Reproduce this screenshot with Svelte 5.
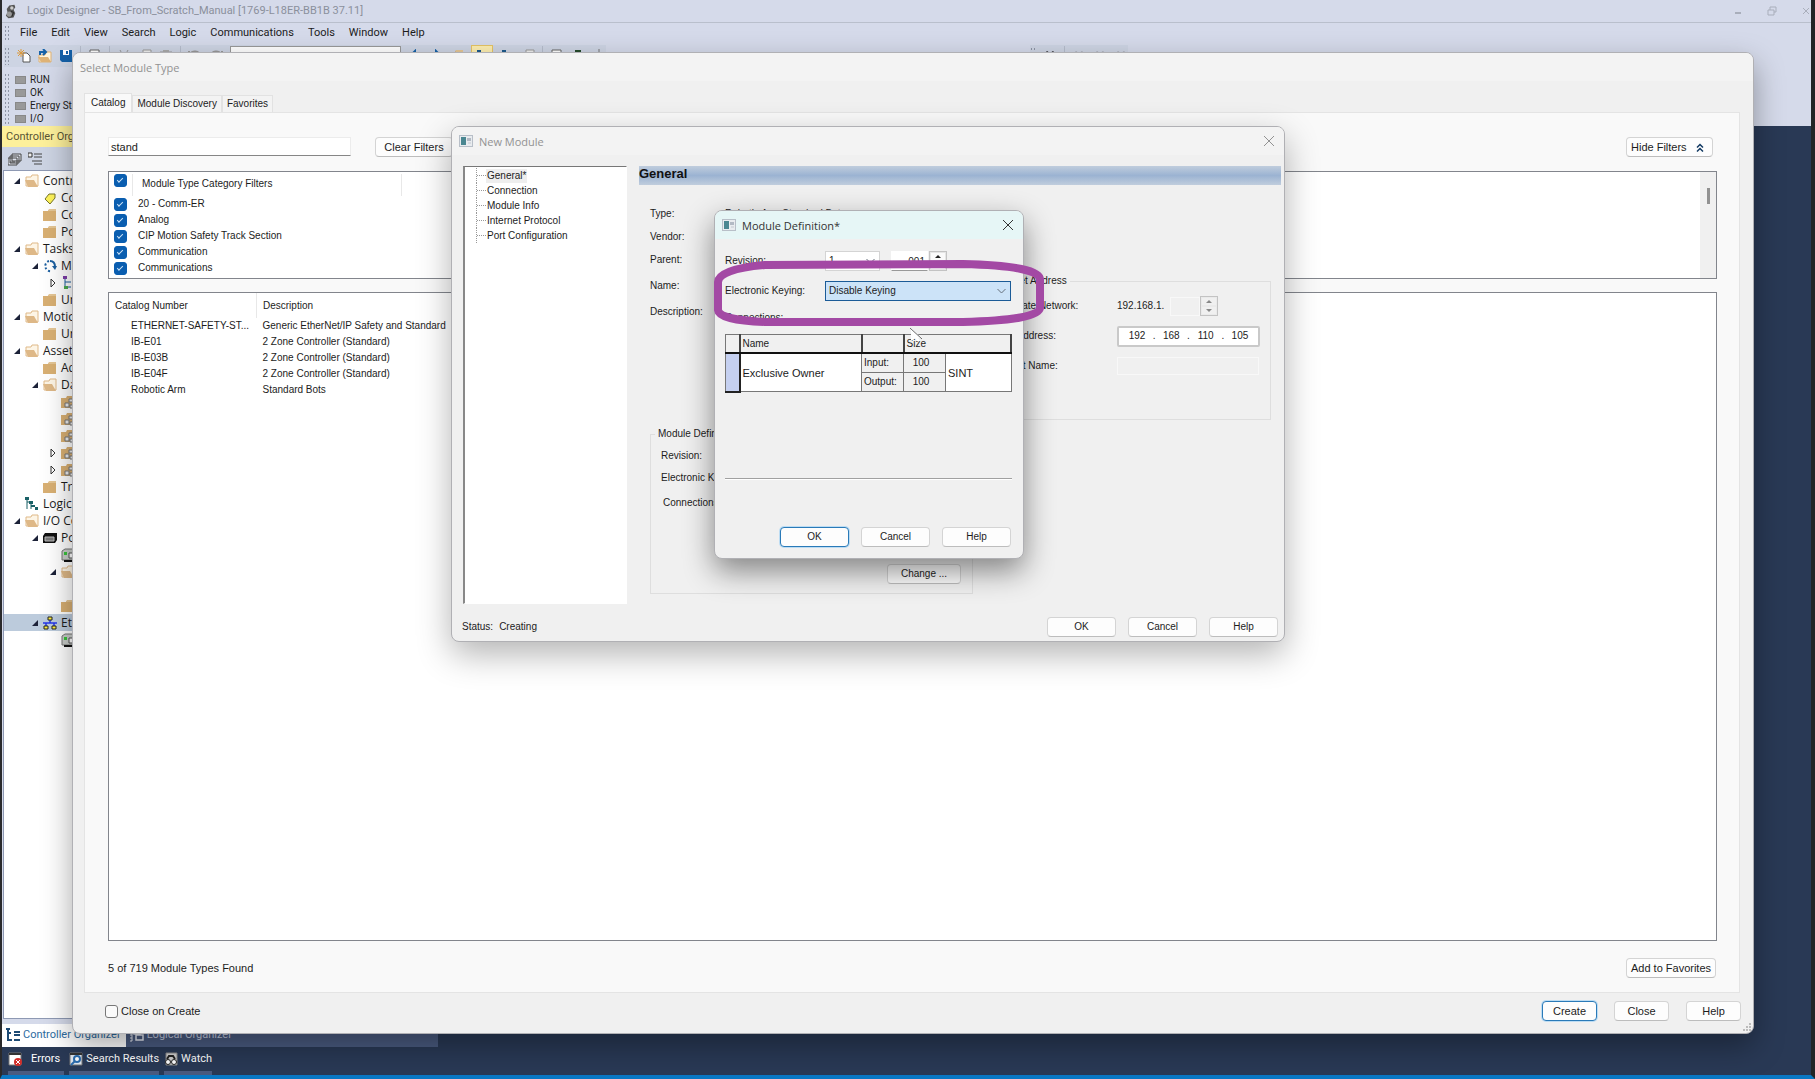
<script lang="ts">
    const menus = ['File', 'Edit', 'View', 'Search', 'Logic', 'Communications', 'Tools', 'Window', 'Help'];
    const leds = ['RUN', 'OK', 'Energy Storage', 'I/O'];

    type Node = { level: number; icon: string; label?: string; arrow?: string; selected?: boolean };

    const tree: Node[] = [
        { level: 0, icon: 'open', label: 'Controller', arrow: 'down' },
        { level: 1, icon: 'tag', label: 'Controller Tags' },
        { level: 1, icon: 'folder', label: 'Controller Fault' },
        { level: 1, icon: 'folder', label: 'Power-Up' },
        { level: 0, icon: 'open', label: 'Tasks', arrow: 'down' },
        { level: 1, icon: 'task', label: 'MainTask', arrow: 'down' },
        { level: 2, icon: 'program', arrow: 'right' },
        { level: 1, icon: 'folder', label: 'Unscheduled' },
        { level: 0, icon: 'open', label: 'Motion', arrow: 'down' },
        { level: 1, icon: 'folder', label: 'Ungrouped' },
        { level: 0, icon: 'open', label: 'Assets', arrow: 'down' },
        { level: 1, icon: 'folder', label: 'Add-On' },
        { level: 1, icon: 'open', label: 'Data Types', arrow: 'down' },
        { level: 2, icon: 'types' },
        { level: 2, icon: 'types' },
        { level: 2, icon: 'types' },
        { level: 2, icon: 'types', arrow: 'right' },
        { level: 2, icon: 'types', arrow: 'right' },
        { level: 1, icon: 'folder', label: 'Trends' },
        { level: 0, icon: 'logical', label: 'Logical Model' },
        { level: 0, icon: 'open', label: 'I/O Config', arrow: 'down' },
        { level: 1, icon: 'chassis', label: 'PointIO', arrow: 'down' },
        { level: 2, icon: 'module' },
        { level: 2, icon: 'open', arrow: 'down' },
        { level: 3, icon: '' },
        { level: 2, icon: 'folder' },
        { level: 1, icon: 'network', label: 'Ethernet', arrow: 'down', selected: true },
        { level: 2, icon: 'module' }
    ];

    const filters = ['20 - Comm-ER', 'Analog', 'CIP Motion Safety Track Section', 'Communication', 'Communications'];

    const modules = [
        ['ETHERNET-SAFETY-ST...', 'Generic EtherNet/IP Safety and Standard'],
        ['IB-E01', '2 Zone Controller (Standard)'],
        ['IB-E03B', '2 Zone Controller (Standard)'],
        ['IB-E04F', '2 Zone Controller (Standard)'],
        ['Robotic Arm', 'Standard Bots']
    ];

    const pages = ['General*', 'Connection', 'Module Info', 'Internet Protocol', 'Port Configuration'];
    const octets = ['192', '168', '110', '105'];

    let search = $state('stand');
    let keying = $state('Disable Keying');
    let closeOnCreate = $state(false);
</script>

{#snippet icon(name: string)}
    <svg class="icon" viewBox="0 0 14 14" aria-hidden="true">
        {#if name === 'folder'}
            <path d="M0 3h5l1-2h7v12H0z" fill="#d9b073" /><path d="M6 2h7" stroke="#f0dcb8" />
        {:else if name === 'open'}
            <path d="M1 12V3h5l1-2h6v11z" fill="#fdf5e6" stroke="#dfb988" /><path d="M0 6h9l4 7H3z" fill="#deb887" />
        {:else if name === 'types'}
            <path d="M0 3h5l1-2h8v12H0z" fill="#d9b073" /><path d="M4 8h4v4H4zM8 4h5v3H8zM9 10h4v3H9z" fill="#eee" stroke="#777" />
        {:else if name === 'tag'}
            <path d="M2 8l4-5h6v4l-5 6z" fill="#fdf25a" stroke="#77752c" />
        {:else if name === 'task'}
            <path d="M6 2a5 5 0 1 0 3 10" fill="none" stroke="#1b5fa0" stroke-width="2" stroke-dasharray="2 2" /><path d="M7 2c4 0 5 3 5 6" fill="none" stroke="#1b5fa0" stroke-width="2" /><path d="M9 7h5l-2 4z" fill="#1b5fa0" />
        {:else if name === 'program'}
            <path d="M4 1v11M4 6h6M4 11h6" stroke="#1b5fa0" fill="none" /><path d="M2 0h4v3H2z" fill="#7d3da8" /><path d="M3 10h4v3H3z" fill="#4caa50" />
        {:else if name === 'logical'}
            <path d="M2 1v11M2 5h4v7M6 9h3" stroke="#1a6167" fill="none" /><path d="M0 0h4v3H0zM4 4h4v3H4zM6 8h4v2H6zM10 10h3v3h-3z" fill="#1a6167" />
        {:else if name === 'chassis'}
            <path d="M0 5l2-3h12v7l-2 3H0z" fill="#111" /><path d="M2 6h9v4H2z" fill="#777" stroke="#bbb" />
        {:else if name === 'module'}
            <path d="M1 3l3-2h10v11H1z" fill="#c9cdc9" stroke="#777" /><path d="M3 4h3v3H3z" fill="#39c43c" /><path d="M8 5h4v5H8z" fill="#fff" stroke="#555" /><path d="M3 13h9" stroke="#111" stroke-width="2" />
        {:else if name === 'network'}
            <path d="M7 4v3M0 7h14M3 7v3M11 7v3" stroke="#2638e9" fill="none" stroke-width="1.5" /><path d="M5 1h4v3H5zM1 10h4v3H1zM9 10h4v3H9z" fill="#ffee3c" stroke="#222" />
        {:else if name === 'new'}
            <path d="M6 4h4l3 3v6H6z" fill="#fff" stroke="#555" /><path d="M4 0v8M0 4h8M1 1l6 6M7 1L1 7" stroke="#dc9a3e" />
        {:else if name === 'openfile'}
            <path d="M1 6h6l1-3h5v10H1z" fill="#fff4de" stroke="#dfb377" /><path d="M0 8h10l3 5H3z" fill="#dfb377" /><path d="M2 6V3h5M5 0l3 3-3 3" fill="none" stroke="#1561a8" stroke-width="2" />
        {:else if name === 'save'}
            <path d="M1 1h12v12H3l-2-2z" fill="#1561a8" /><path d="M4 1h6v5H4z" fill="#fff" /><path d="M8 2v3" stroke="#1561a8" stroke-width="2" />
        {:else if name === 'print'}
            <path d="M2 12V1h9v11" fill="#fff" stroke="#666" />
        {:else if name === 'cut'}
            <path d="M3 1l6 11M11 1L5 12" stroke="#999" />
        {:else if name === 'copy'}
            <path d="M5 1h8v9H5zM1 4h8v9H1z" fill="#eee" stroke="#999" />
        {:else if name === 'paste'}
            <path d="M1 3h12v10H1z" fill="#ddd" stroke="#999" /><path d="M4 1h6v3H4z" fill="#aaa" />
        {:else if name === 'undo'}
            <path d="M2 6c1-5 10-5 10 2M1 2v5h5" fill="none" stroke="#999" stroke-width="2" />
        {:else if name === 'redo'}
            <path d="M12 6C11 1 2 1 2 8M13 2v5H8" fill="none" stroke="#999" stroke-width="2" />
        {:else if name === 'up'}
            <path d="M2 7l5-5v10M3 6h8" fill="none" stroke="#1561a8" stroke-width="2" />
        {:else if name === 'down'}
            <path d="M12 7L7 2v10M11 6H3" fill="none" stroke="#1561a8" stroke-width="2" />
        {:else if name === 'hierarchy'}
            <path d="M2 1h4v4H2zM7 6h4v3H7zM7 10h4v3H7z" fill="#1d5a8c" /><path d="M3 4v8h4M3 7h4" fill="none" stroke="#1d5a8c" />
        {:else if name === 'organizer'}
            <path d="M0 1h4M2 1v11h4M2 5h3M8 4h6M8 7h6M8 12h6" fill="none" stroke="#1d4a74" stroke-width="2" />
        {:else if name === 'logicaltab'}
            <path d="M2 1v12M0 4h2M0 7h2M0 10h2M0 13h2" stroke="#e8ecf4" /><path d="M4 2h6v4H4zM6 7h7v5H6z" fill="#4a5b80" stroke="#e8ecf4" stroke-width="1.5" />
        {:else if name === 'chip'}
            <path d="M4 1h6v12H4z" fill="#264b2c" /><path d="M2 4h2M2 7h2M10 4h2M10 7h2" stroke="#5da162" />
        {:else if name === 'transfer'}
            <path d="M7 0v10M3 3v5h8V3" fill="none" stroke="#777" />
        {:else if name === 'find'}
            <path d="M1 5l3-3 3 2 3-2 3 3v7H9V7H5v5H1z" fill="#222" />
        {:else if name === 'findgrey'}
            <path d="M1 5l3-3 3 2 3-2 3 3v7H9V7H5v5H1z" fill="#a7abb4" />
        {:else if name === 'stack'}
            <path d="M4 2h9v7H4zM2 4h9v7H2zM0 6h9v7H0z" fill="#dfe3ec" stroke="#444" /><path d="M2 10h5" stroke="#444" />
        {:else if name === 'list'}
            <path d="M0 1h4v4H0z" fill="#eee" stroke="#333" /><path d="M6 2h8M6 5h8M4 9h10M6 12h8" stroke="#444" />
        {:else if name === 'errors'}
            <path d="M1 1h12v12H1z" fill="#fff" stroke="#777" /><path d="M1 2h12" stroke="#333" stroke-width="2" /><circle cx="10" cy="10" r="4" fill="#d32f2b" /><path d="M8 8l4 4M12 8l-4 4" stroke="#fff" />
        {:else if name === 'results'}
            <path d="M1 1h12v12H1z" fill="#dfe7f0" stroke="#777" /><path d="M1 2h12" stroke="#333" stroke-width="2" /><circle cx="8" cy="7" r="3" fill="#fff" stroke="#2a6cae" stroke-width="2" /><path d="M6 9l-4 4" stroke="#2a6cae" stroke-width="2" />
        {:else if name === 'watch'}
            <path d="M2 1h11v12H2z" fill="#ccc" stroke="#888" /><circle cx="4" cy="10" r="2.5" fill="#fff" stroke="#222" /><circle cx="10" cy="10" r="2.5" fill="#fff" stroke="#222" /><path d="M3 7l2-3h4l2 3" fill="none" stroke="#222" stroke-width="2" />
        {/if}
    </svg>
{/snippet}

{#snippet windowIcon()}
    <svg class="window-icon" viewBox="0 0 14 12" aria-hidden="true">
        <path d="M0 0h14v12H0z" fill="#e9ecef" /><path d="M0 .5h14M.5 0v12M13.5 0v12M0 11.5h14" stroke="#b8bfc8" />
        <path d="M2 2h5v8H2z" fill="#4a8791" /><path d="M9 3v3M11 3v3" stroke="#7d8899" /><path d="M9 8h3" stroke="#c4c9d1" />
    </svg>
{/snippet}

{#snippet closeIcon()}
    <svg class="close-icon" viewBox="0 0 12 12" aria-hidden="true"><path d="M1 1l10 10M11 1L1 11" stroke="currentColor" fill="none" /></svg>
{/snippet}

{#snippet chevron()}
    <svg class="chevron" viewBox="0 0 9 6" aria-hidden="true"><path d="M.5 1l4 4 4-4" fill="none" stroke="#66717c" /></svg>
{/snippet}

<div class="designer">
    <header class="titlebar">
        <svg class="logo" viewBox="0 0 14 16" aria-hidden="true">
            <path d="M5 1l6-1 1 3-2 3 2 4-2 5-6 1-3-3 2-4-1-4z" fill="#555" />
            <circle cx="8" cy="4" r="2" fill="#ccc" /><circle cx="5" cy="11" r="3" fill="#999" /><path d="M7 8l3 1-2 5" fill="none" stroke="#222" />
        </svg>
        <span>Logix Designer - SB_From_Scratch_Manual [1769-L18ER-BB1B 37.11]</span>
        <div class="titlebar__buttons">
            <button aria-label="Minimize"><svg viewBox="0 0 10 10"><path d="M2 7h6" stroke="currentColor" stroke-width="2" /></svg></button>
            <button aria-label="Restore"><svg viewBox="0 0 10 10"><path d="M1 4h6v5H1zM3 4V1h6v5H7" fill="none" stroke="currentColor" /></svg></button>
            <button aria-label="Close"><svg viewBox="0 0 10 10"><path d="M2 2l6 6M8 2L2 8" fill="none" stroke="currentColor" /></svg></button>
        </div>
    </header>
    <nav class="menubar">
        <span class="grip"></span>
        {#each menus as menu}
            <button>{menu}</button>
        {/each}
    </nav>
    <div class="toolbars">
        <div class="toolbar">
            <span class="grip"></span>
            {@render icon('new')}
            {@render icon('openfile')}
            {@render icon('save')}
            <i></i>
            {@render icon('print')}
            <i></i>
            {@render icon('cut')}
            {@render icon('copy')}
            {@render icon('paste')}
            <i></i>
            {@render icon('undo')}
            {@render icon('redo')}
            <input class="toolbar__search" aria-label="Find" />
            {@render icon('up')}
            {@render icon('down')}
            {@render icon('folder')}
            <span class="toolbar__active">{@render icon('hierarchy')}</span>
            {@render icon('hierarchy')}
            {@render icon('copy')}
            <i></i>
            {@render icon('print')}
            {@render icon('chip')}
            {@render icon('transfer')}
        </div>
        <div class="toolbar">
            <span class="grip"></span>
            {@render icon('find')}
            <i></i>
            {@render icon('findgrey')}
            {@render icon('findgrey')}
            {@render icon('findgrey')}
        </div>
    </div>
    <div class="status">
        <span class="grip"></span>
        <ul>
            {#each leds as led}
                <li>{led}</li>
            {/each}
        </ul>
    </div>

    <div class="workspace">
        <aside class="organizer">
            <div class="organizer__title">Controller Organizer</div>
            <div class="organizer__tools">{@render icon('stack')}{@render icon('list')}</div>
            <ul class="tree">
                {#each tree as node}
                    <li class="tree__row" class:tree__row--selected={node.selected} style="padding-left: {node.level * 18 + 9}px">
                        <span class="tree__arrow">
                            {#if node.arrow === 'down'}
                                <svg viewBox="0 0 8 8"><path d="M7 1v6H1z" fill="#1c2238" /></svg>
                            {:else if node.arrow === 'right'}
                                <svg viewBox="0 0 8 8"><path d="M2 0v8l4-4z" fill="#fff" stroke="#333" /></svg>
                            {/if}
                        </span>
                        {@render icon(node.icon)}
                        {node.label ?? ''}
                    </li>
                {/each}
            </ul>
            <div class="organizer__tabs">
                <button class="organizer__tab organizer__tab--active">{@render icon('organizer')}Controller Organizer</button>
                <button class="organizer__tab">{@render icon('logicaltab')}Logical Organizer</button>
            </div>
        </aside>
    </div>
    <footer class="dock">
        <button class="dock__wide">{@render icon('errors')}Errors</button>
        <button>{@render icon('results')}Search Results</button>
        <button>{@render icon('watch')}Watch</button>
    </footer>
</div>

<section class="window select-module">
    <h1 class="window__title window__title--inactive">Select Module Type</h1>
    <div class="tabs">
        <button class="tabs__tab tabs__tab--active">Catalog</button>
        <button class="tabs__tab">Module Discovery</button>
        <button class="tabs__tab">Favorites</button>
    </div>
    <div class="catalog">
        <div class="catalog__search">
            <input class="catalog__input" aria-label="Search" bind:value={search} />
            <button class="button catalog__clear">Clear Filters</button>
            <button class="button catalog__hide">
                Hide Filters
                <svg viewBox="0 0 8 8" aria-hidden="true"><path d="M1 4l3-3 3 3M1 8l3-3 3 3" fill="none" stroke="#123a63" stroke-width="1.5" /></svg>
            </button>
        </div>
        <div class="box filters">
            <div class="filters__list">
                <label class="filters__head"><input type="checkbox" checked /><span>Module Type Category Filters</span></label>
                {#each filters as filter}
                    <label><input type="checkbox" checked />{filter}</label>
                {/each}
            </div>
            <div class="filters__scroll"><span></span></div>
        </div>
        <div class="box results">
            <table>
                <thead>
                    <tr><th>Catalog Number</th><th>Description</th></tr>
                </thead>
                <tbody>
                    {#each modules as [number, description]}
                        <tr><td>{number}</td><td>{description}</td></tr>
                    {/each}
                </tbody>
            </table>
        </div>
        <div class="catalog__foot">
            <span>5 of 719 Module Types Found</span>
            <button class="button catalog__favorite">Add to Favorites</button>
        </div>
    </div>
    <div class="select-module__foot">
        <label><input type="checkbox" bind:checked={closeOnCreate} />Close on Create</label>
        <button class="button button--default">Create</button>
        <button class="button">Close</button>
        <button class="button">Help</button>
    </div>
    <svg class="resize" viewBox="0 0 9 9" aria-hidden="true"><path d="M6 0h2v2H6zM3 3h2v2H3zM6 3h2v2H6zM0 6h2v2H0zM3 6h2v2H3zM6 6h2v2H6z" fill="#bbb" /></svg>
</section>

<section class="window new-module">
    <h2 class="window__title window__title--inactive">
        {@render windowIcon()}New Module
        <button aria-label="Close">{@render closeIcon()}</button>
    </h2>
    <div class="new-module__body">
        <ul class="pages">
            {#each pages as page, i}
                <li><a href="#page{i}" class:current={i === 0}>{page}</a></li>
            {/each}
        </ul>
        <div class="general">
            <h3 class="general__title">General</h3>
            <dl class="general__facts">
                <dt>Type:</dt>
                <dd>Robotic Arm Standard Bots</dd>
                <dt>Vendor:</dt>
                <dd></dd>
                <dt>Parent:</dt>
                <dd></dd>
                <dt class="general__tall">Name:</dt>
                <dd></dd>
                <dt class="general__tall">Description:</dt>
                <dd></dd>
            </dl>
            <fieldset class="address">
                <legend>Ethernet Address</legend>
                <div class="address__row">
                    <label for="private">Private Network:</label>
                    <span class="address__prefix">192.168.1.</span>
                    <input id="private" class="address__host" disabled />
                    <span class="spinner spinner--disabled">
                        <button aria-label="Increase" disabled></button><button aria-label="Decrease" disabled></button>
                    </span>
                </div>
                <div class="address__row">
                    <label for="octet0">IP Address:</label>
                    <span class="address__ip">
                        {#each octets as octet, i}
                            {#if i > 0}<span>.</span>{/if}
                            <input id="octet{i}" aria-label="Octet {i + 1}" value={octet} />
                        {/each}
                    </span>
                </div>
                <div class="address__row">
                    <label for="host">Host Name:</label>
                    <input id="host" class="address__name" disabled />
                </div>
            </fieldset>
            <fieldset class="definition">
                <legend>Module Definition</legend>
                <p>Revision:</p>
                <p>Electronic Keying:</p>
                <p class="definition__last">Connections:</p>
                <button class="button definition__change">Change ...</button>
            </fieldset>
        </div>
    </div>
    <div class="new-module__foot">
        <span>Status:</span><span>Creating</span>
        <button class="button">OK</button>
        <button class="button">Cancel</button>
        <button class="button">Help</button>
    </div>
</section>

<section class="window module-definition">
    <h2 class="window__title window__title--active">
        {@render windowIcon()}Module Definition*
        <button aria-label="Close">{@render closeIcon()}</button>
    </h2>
    <div class="module-definition__body">
        <div class="field">
            <label for="major">Revision:</label>
            <span class="select select--small">
                <select id="major"><option>1</option></select>
                {@render chevron()}
            </span>
            <input class="minor" aria-label="Minor revision" value="001" />
            <span class="spinner">
                <button aria-label="Increase"></button><button aria-label="Decrease"></button>
            </span>
        </div>
        <div class="field">
            <label for="keying">Electronic Keying:</label>
            <span class="select select--focus">
                <select id="keying" bind:value={keying}><option>Disable Keying</option></select>
                {@render chevron()}
            </span>
        </div>
        <div class="connections-label">Connections:</div>
        <table class="connections">
            <colgroup><col class="c0" /><col class="c1" /><col class="c2" /><col class="c3" /><col class="c4" /></colgroup>
            <thead>
                <tr><th></th><th>Name</th><th></th><th colspan="2">Size</th></tr>
            </thead>
            <tbody>
                <tr>
                    <td rowspan="2" class="connections__mark"></td>
                    <td rowspan="2" class="connections__edit">Exclusive Owner</td>
                    <td>Input:</td>
                    <td class="connections__size">100</td>
                    <td rowspan="2" class="connections__edit">SINT</td>
                </tr>
                <tr><td>Output:</td><td class="connections__size">100</td></tr>
            </tbody>
        </table>
        <hr />
        <div class="module-definition__foot">
            <button class="button button--default">OK</button>
            <button class="button">Cancel</button>
            <button class="button">Help</button>
        </div>
    </div>
</section>

<!-- highlight drawn over the keying drop-down, and the mouse pointer -->
<svg class="marker" viewBox="0 0 332 68" aria-hidden="true">
    <path d="M52 5L250 4Q328 6 327 20V48Q326 60 250 62H52Q6 60 5 50V22Q6 9 52 5Z" fill="none" stroke="#a349a4" stroke-width="8" />
</svg>
<svg class="pointer" viewBox="0 0 14 18" aria-hidden="true"><path d="M1 0v13l4-3 3 4 2-1-2-3h4z" fill="#fff" /><path d="M0 0l12 11" stroke="#666" /></svg>

<style>
    :global(body) {
        background: #293955;
    }
    .designer,
    .window {
        font-family: 'Liberation Sans', sans-serif;
        font-size: 10px;
        line-height: 16px;
        color: #1c1c1c;
    }
    button,
    input,
    select {
        box-sizing: border-box;
        font: inherit;
        color: inherit;
        margin: 0;
        padding: 0;
    }
    button {
        border: none;
        background: none;
        white-space: nowrap;
    }
    ul {
        list-style: none;
        margin: 0;
        padding: 0;
    }
    svg {
        display: block;
        flex: none;
    }
    .icon {
        width: 14px;
        height: 14px;
    }

    /* main window */
    .designer {
        box-sizing: border-box;
        min-height: 100vh;
        display: flex;
        flex-direction: column;
        background: #293955;
        border-left: 2px solid #2a2a2c;
        border-right: 4px solid #222426;
        border-bottom: 4px solid #0a78c4;
        font-family: Roboto, sans-serif;
        font-size: 11px;
    }
    .titlebar {
        display: flex;
        align-items: center;
        gap: 10px;
        height: 22px;
        padding-left: 3px;
        background: #d5daea;
        border-bottom: 1px solid #b9bfcc;
        color: #8b909c;
    }
    .logo {
        width: 12px;
        height: 15px;
    }
    .titlebar__buttons {
        display: flex;
        gap: 24px;
        margin-left: auto;
        color: #a9aebb;
    }
    .titlebar__buttons svg {
        width: 10px;
        height: 10px;
    }
    .menubar {
        box-sizing: border-box;
        display: flex;
        align-items: center;
        gap: 14px;
        height: 22px;
        padding: 0 0 2px 2px;
        background: #d5daea;
    }
    .menubar .grip {
        margin-right: -4px;
    }
    .grip {
        width: 6px;
        align-self: stretch;
        background: radial-gradient(#8d94a5 1px, transparent 1px) 0 0 / 3px 4px;
        margin: 2px 0;
    }
    .toolbars {
        display: flex;
        align-items: flex-start;
        gap: 424px;
        height: 26px;
        background: #d5daea;
        padding-left: 2px;
    }
    .toolbar {
        display: flex;
        align-items: center;
        gap: 7px;
        height: 22px;
        background: #cdd4e3;
    }
    .toolbar i {
        width: 1px;
        height: 20px;
        background: #b5bccb;
    }
    .toolbar__search {
        width: 171px;
        height: 20px;
        border: 1px solid #999;
        background: #fff;
    }
    .toolbar__active {
        padding: 3px;
        background: #fdeeb0;
        border: 1px solid #e5c365;
    }
    .status {
        display: flex;
        gap: 5px;
        height: 55px;
        padding-left: 2px;
        background: #d5daea;
        font-size: 10px;
        line-height: 13px;
    }
    .status li {
        display: flex;
        align-items: center;
        gap: 4px;
    }
    .status ul {
        padding-top: 2px;
    }
    .status li::before {
        content: '';
        width: 9px;
        height: 6px;
        background: #999;
        border: 1px solid #888;
    }
    .workspace {
        flex: 1;
        display: flex;
    }
    .organizer {
        width: 436px;
        display: flex;
        flex-direction: column;
        background: #d5daea;
    }
    .organizer__title {
        height: 21px;
        line-height: 21px;
        padding-left: 4px;
        background: #fdf09b;
        color: #5a5434;
    }
    .organizer__tools {
        display: flex;
        align-items: center;
        gap: 6px;
        height: 23px;
        padding-left: 6px;
        background: #cdd4e3;
    }
    .tree {
        flex: 1;
        margin-left: 1px;
        padding-top: 1px;
        background: #fff;
        border: 1px solid #8e99b3;
        font: 12px/17px 'Open Sans', sans-serif;
    }
    .tree__row {
        display: flex;
        align-items: center;
        gap: 4px;
        height: 17px;
    }
    .tree__row--selected {
        background: #bccbdc;
    }
    .tree__arrow {
        width: 8px;
    }
    .organizer__tabs {
        display: flex;
        margin-top: 5px;
        height: 23px;
        background: #4a5b80;
    }
    .organizer__tab {
        display: flex;
        align-items: center;
        gap: 3px;
        padding: 0 5px 2px 4px;
        color: #c5cde0;
    }
    .organizer__tab--active {
        background: #fff;
        color: #2d6b9f;
    }
    .dock {
        display: flex;
        gap: 5px;
        height: 28px;
        padding-left: 6px;
        color: #fff;
    }
    .dock button {
        display: flex;
        align-items: center;
        gap: 3px;
        border-bottom: 4px solid #4a5b80;
    }
    .dock .dock__wide {
        gap: 9px;
        padding-right: 4px;
    }

    /* dialogs */
    .window {
        position: absolute;
        box-sizing: border-box;
        display: flex;
        flex-direction: column;
        background: #f0f0f0;
        border: 1px solid #b0b0b4;
        border-radius: 8px;
        box-shadow: 0 12px 30px rgba(0, 0, 0, 0.35);
    }
    .window__title {
        display: flex;
        align-items: center;
        gap: 6px;
        height: 28px;
        margin: 0;
        padding: 0 9px 0 7px;
        border-radius: 7px 7px 0 0;
        background: #f3f3f3;
        font: 11px 'Open Sans', sans-serif;
    }
    .window__title button {
        margin-left: auto;
    }
    .window__title--inactive {
        color: #929292;
    }
    .window__title--active {
        background: #e6f6f6;
        color: #333;
    }
    .window-icon {
        width: 14px;
        height: 12px;
    }
    .close-icon {
        width: 12px;
        height: 12px;
    }
    .button {
        height: 20px;
        background: #fdfdfd;
        border: 1px solid #d4d4d4;
        border-bottom-color: #bdbdbd;
        border-radius: 4px;
        text-align: center;
        font-size: 11px;
    }
    .button--default {
        border: 1px solid #2a7ab8;
        box-shadow: 0 0 0 1px #bcdcf3;
    }
    input[type='checkbox'] {
        appearance: none;
        flex: none;
        width: 13px;
        height: 13px;
        border: 1px solid #777;
        border-radius: 3px;
        background: #fafafa;
    }
    input[type='checkbox']:checked {
        border-color: #0a5eb0;
        background: #0a5eb0;
    }
    input[type='checkbox']:checked::after {
        content: '';
        display: block;
        width: 5px;
        height: 2px;
        margin: 3px 0 0 2px;
        border: solid #cfe4f7;
        border-width: 0 0 1px 1px;
        transform: rotate(-45deg);
    }
    .box {
        border: 1px solid #82858c;
        background: #fff;
    }

    .select-module {
        top: 52px;
        right: 61px;
        bottom: 45px;
        left: 72px;
    }
    .tabs {
        display: flex;
        align-items: flex-end;
        height: 31px;
        padding-left: 11px;
    }
    .tabs__tab {
        height: 17px;
        padding: 0 4px;
        border: 1px solid #e2e2e2;
        border-bottom: none;
        background: #f3f3f3;
    }
    .tabs__tab--active {
        height: 19px;
        padding: 0 6px;
        background: #f9f9f9;
    }
    .catalog {
        flex: 1;
        display: flex;
        flex-direction: column;
        margin: 0 13px 0 11px;
        padding: 24px 22px 14px 23px;
        background: #f9f9f9;
        border: 1px solid #e4e4e4;
    }
    .catalog__search {
        display: flex;
    }
    .catalog__input {
        width: 243px;
        height: 19px;
        padding-left: 2px;
        border: 1px solid #ececec;
        border-bottom-color: #868686;
        background: #fff;
        font-size: 11px;
    }
    .catalog__clear {
        width: 78px;
        margin-left: 24px;
    }
    .catalog__hide {
        display: flex;
        align-items: center;
        justify-content: space-between;
        width: 87px;
        margin-left: auto;
        margin-right: 4px;
        padding: 0 8px 0 4px;
    }
    .catalog__hide svg {
        width: 8px;
        height: 9px;
    }
    .filters {
        display: flex;
        margin-top: 14px;
        height: 106px;
    }
    .filters__list {
        flex: 1;
        padding-left: 5px;
    }
    .filters__list label {
        display: flex;
        align-items: center;
        gap: 11px;
        height: 16px;
    }
    .filters__list .filters__head {
        align-items: flex-start;
        height: 22px;
        padding-top: 2px;
    }
    .filters__head span {
        box-sizing: border-box;
        width: 270px;
        height: 22px;
        margin-left: -6px;
        padding: 2px 0 0 9px;
        border: solid #e8e8e8;
        border-width: 0 1px;
    }
    .filters__scroll {
        width: 16px;
        background: #f0f0f0;
        padding-top: 16px;
    }
    .filters__scroll span {
        display: block;
        width: 3px;
        height: 16px;
        margin: 0 auto;
        background: #919191;
    }
    .results {
        flex: 1;
        margin-top: 13px;
    }
    .results table {
        border-collapse: collapse;
    }
    .results th {
        height: 25px;
        padding: 0 0 0 6px;
        border-right: 1px solid #e8e8e8;
        text-align: left;
        font-weight: normal;
    }
    .results th:first-child {
        width: 141px;
    }
    .results th:last-child {
        border: none;
    }
    .results td {
        padding: 0 0 0 6px;
        white-space: nowrap;
    }
    .results td:first-child {
        padding-left: 22px;
    }
    .catalog__foot {
        display: flex;
        align-items: center;
        justify-content: space-between;
        margin-top: 17px;
        font-size: 11px;
    }
    .catalog__favorite {
        width: 90px;
        margin-right: 1px;
    }
    .select-module__foot {
        box-sizing: border-box;
        display: flex;
        align-items: center;
        height: 40px;
        padding: 0 12px 4px 32px;
        font-size: 11px;
    }
    .select-module__foot label {
        display: flex;
        align-items: center;
        gap: 3px;
        margin-right: auto;
    }
    .select-module__foot .button {
        width: 55px;
        margin-left: 17px;
    }
    .resize {
        position: absolute;
        right: 1px;
        bottom: 1px;
        width: 9px;
        height: 9px;
    }

    .new-module {
        top: 126px;
        left: 451px;
        width: 834px;
        box-shadow: 0 12px 34px rgba(0, 0, 0, 0.3);
    }
    .new-module__body {
        display: flex;
        gap: 12px;
        padding: 11px 3px 0 11px;
    }
    .pages {
        box-sizing: border-box;
        width: 164px;
        height: 438px;
        padding: 1px 0 0 11px;
        background: #fff;
        border: 1px solid #fff;
        border-top-color: #777;
        border-left: 2px solid #888;
    }
    .pages li {
        display: flex;
        align-items: center;
        height: 15px;
        border-left: 1px dotted #999;
    }
    .pages li::before {
        content: '';
        width: 9px;
        border-top: 1px dotted #999;
    }
    .pages a {
        color: inherit;
        text-decoration: none;
        line-height: 14px;
        padding: 0 1px;
    }
    .pages .current {
        background: #eee;
    }
    .general {
        flex: 1;
        display: grid;
        grid-template-columns: 343px 1fr;
        grid-template-rows: auto 1fr auto;
        padding-bottom: 10px;
    }
    .general__title {
        grid-column: 1 / 3;
        height: 19px;
        margin: 0;
        background: linear-gradient(#c0cddd, #9bb3d2 50%, #c0cddd);
        font: bold 13px/16px 'Liberation Sans', sans-serif;
        color: #111;
    }
    .general__facts {
        display: grid;
        grid-template-columns: 75px 1fr;
        align-content: start;
        margin: 17px 0 0 11px;
        line-height: 23px;
    }
    .general__facts dd {
        margin: 0;
    }
    .general__tall {
        padding-top: 3px;
    }
    fieldset {
        border: 1px solid #dedede;
        margin: 0;
        padding: 0;
    }
    legend {
        padding: 0 3px;
        margin-left: 4px;
    }
    .address {
        display: flex;
        flex-direction: column;
        height: 145px;
        margin: 88px 10px 0 0;
    }
    .address__row {
        display: flex;
        align-items: center;
        height: 30px;
        padding-left: 22px;
    }
    .address__row:nth-child(2) {
        margin-top: 2px;
    }
    .address__row label {
        width: 112px;
    }
    .address__prefix {
        width: 53px;
    }
    .address__host {
        width: 30px;
        height: 19px;
        border: 1px solid #f8f8f8;
        background: #f0f0f0;
    }
    .address__ip {
        box-sizing: border-box;
        display: flex;
        justify-content: space-between;
        width: 143px;
        height: 21px;
        padding: 0 8px;
        border: 2px solid #c9c9c9;
        border-radius: 2px;
        background: #fff;
    }
    .address__ip input {
        width: 20px;
        border: none;
        background: none;
        text-align: center;
    }
    .address__name {
        width: 142px;
        height: 18px;
        border: 1px solid #f8f8f8;
        background: #f0f0f0;
    }
    .spinner {
        box-sizing: border-box;
        display: flex;
        flex-direction: column;
        width: 18px;
        height: 20px;
        border: 1px solid #c3c3c3;
    }
    .spinner button {
        flex: 1;
        display: flex;
        align-items: center;
        justify-content: center;
        background: #fafafa;
        border: 1px solid #e6e6e6;
    }
    .spinner button::before {
        content: '';
        border: solid transparent;
        border-width: 0 3px;
        border-bottom: 3px solid #222;
    }
    .spinner button:last-child::before {
        border-bottom: none;
        border-top: 3px solid #222;
    }
    .spinner--disabled button {
        background: #f0f0f0;
        opacity: 0.5;
    }
    .definition {
        width: 321px;
        height: 166px;
        margin-left: 11px;
        display: flex;
        flex-direction: column;
    }
    .definition p {
        margin: 6px 0 0 10px;
    }
    .definition .definition__last {
        margin: 9px 0 0 12px;
    }
    .definition__change {
        width: 74px;
        margin: auto 11px 9px auto;
    }
    .new-module__foot {
        display: flex;
        align-items: center;
        gap: 12px;
        padding: 13px 6px 4px 10px;
    }
    .new-module__foot span:first-child {
        margin-right: -6px;
    }
    .new-module__foot span + .button {
        margin-left: auto;
    }
    .new-module .button,
    .module-definition .button {
        font-size: 10px;
    }
    .new-module__foot .button,
    .module-definition__foot .button {
        width: 69px;
    }

    .module-definition {
        top: 210px;
        left: 714px;
        width: 310px;
        box-shadow: 0 12px 30px rgba(0, 0, 0, 0.45);
    }
    .module-definition__body {
        padding: 7px 11px 11px 10px;
    }
    .field {
        display: flex;
        align-items: center;
        height: 30px;
    }
    .field label {
        width: 100px;
    }
    .select {
        display: grid;
        align-items: center;
        flex: 1;
        height: 20px;
        background: #fff;
        border: 1px solid #d4d4d4;
        box-sizing: border-box;
        margin-right: 1px;
    }
    .select select,
    .select svg {
        grid-area: 1 / 1;
    }
    .select select {
        appearance: none;
        border: none;
        background: none;
        padding-left: 3px;
        height: 18px;
    }
    .select--small {
        flex: none;
        width: 55px;
        margin-right: 11px;
    }
    .select--focus {
        background: #cce3f8;
        border-color: #1b5b97;
    }
    .chevron {
        width: 9px;
        height: 6px;
        justify-self: end;
        margin-right: 4px;
    }
    .minor {
        width: 37px;
        height: 20px;
        padding-right: 2px;
        border: 1px solid #fff;
        border-bottom-color: #999;
        background: #fff;
        text-align: right;
        margin-right: 1px;
    }
    .connections-label {
        height: 18px;
        margin-top: 4px;
    }
    .connections {
        width: 100%;
        margin-top: 6px;
        table-layout: fixed;
        border-collapse: collapse;
    }
    .connections .c0 {
        width: 14px;
    }
    .connections .c1 {
        width: 122px;
    }
    .connections .c2,
    .connections .c3 {
        width: 42px;
    }
    .connections th,
    .connections td {
        height: 18px;
        padding: 0 0 0 2px;
        border: 1px solid #777;
        text-align: left;
        font-weight: normal;
    }
    .connections th {
        height: 17px;
        border-bottom: 2px solid #111;
        border-right: 2px solid #444;
    }
    .connections .connections__mark {
        background: #c5d0f0;
        border-right: 2px solid #222;
        border-bottom: 2px solid #222;
    }
    .connections .connections__edit {
        background: #fff;
        font-size: 11px;
    }
    .connections .connections__size {
        padding: 0 7px 0 0;
        text-align: center;
    }
    hr {
        margin: 85px 0 47px;
        border: none;
        border-top: 1px solid #a0a0a0;
        border-bottom: 1px solid #fff;
    }
    .module-definition__foot {
        display: flex;
        justify-content: flex-end;
        gap: 12px;
        padding-right: 1px;
    }
    .marker {
        position: absolute;
        top: 260px;
        left: 713px;
        width: 332px;
        height: 68px;
        pointer-events: none;
    }
    .pointer {
        position: absolute;
        top: 328px;
        left: 910px;
        width: 14px;
        height: 18px;
        pointer-events: none;
    }
</style>
